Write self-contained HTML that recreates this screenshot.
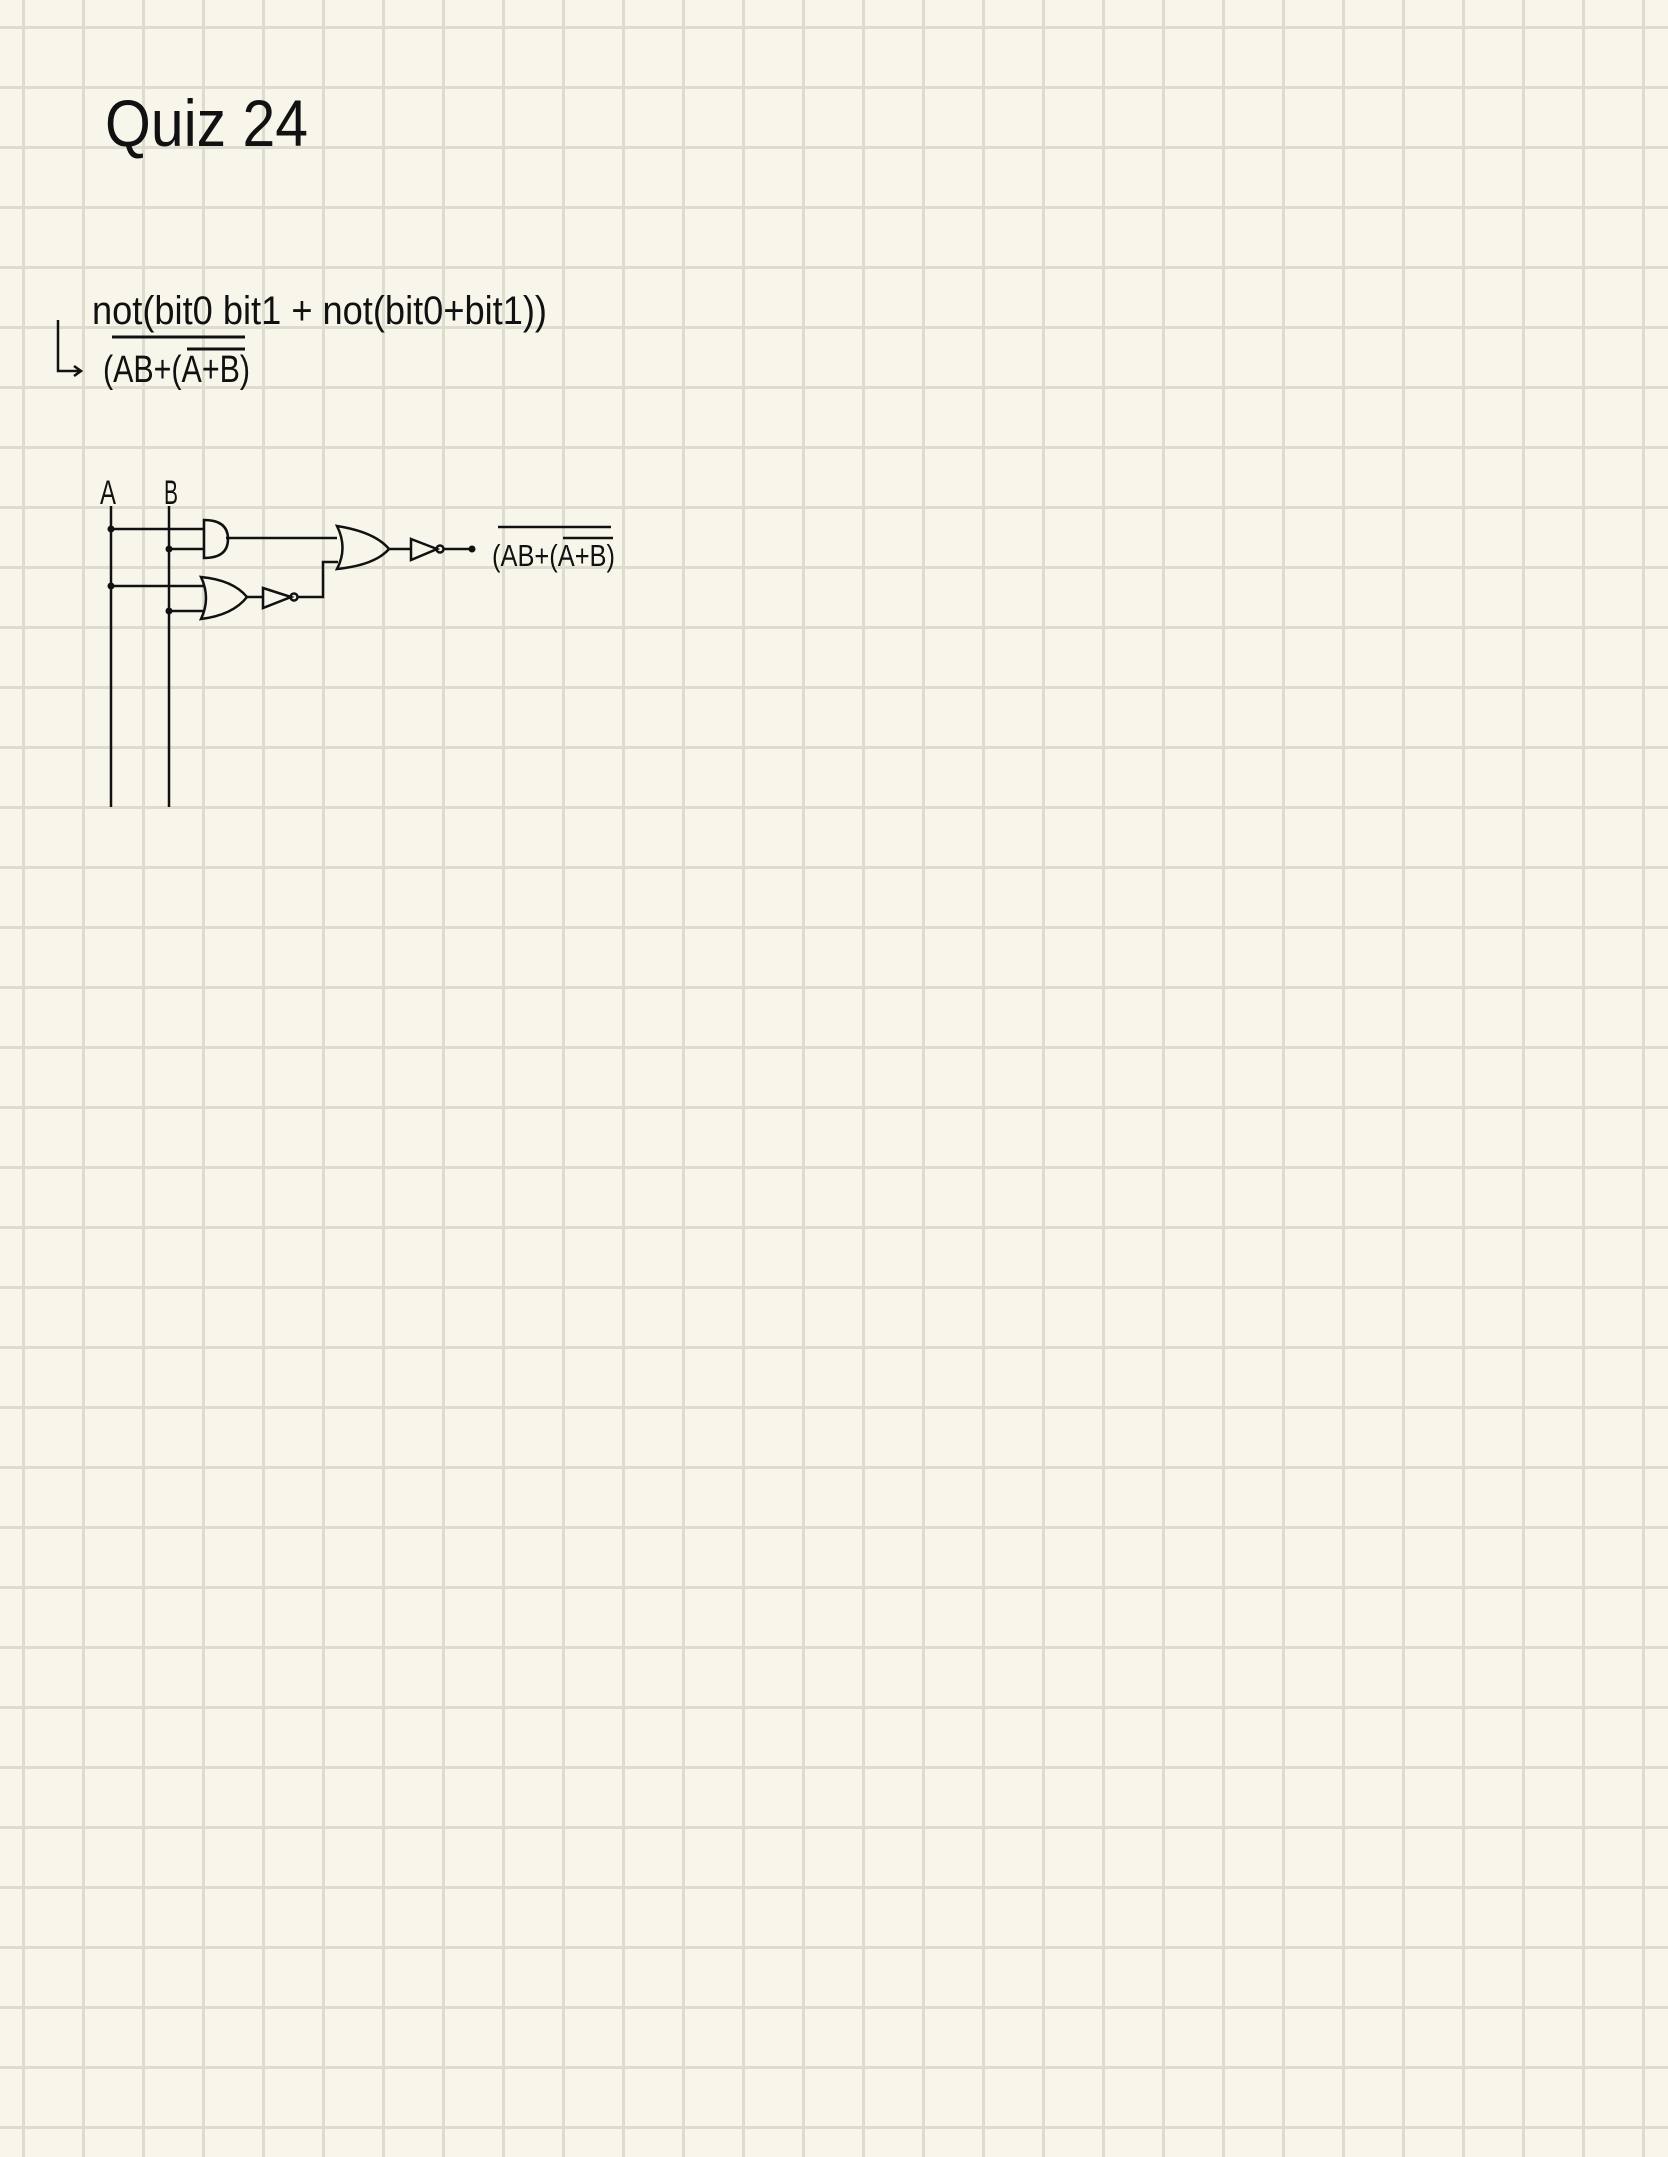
<!DOCTYPE html>
<html><head><meta charset="utf-8"><style>
html,body{margin:0;padding:0}
body{width:1668px;height:2157px;overflow:hidden;background-color:#f8f5ea;
background-image:linear-gradient(to right,#dedbcf 0,#dedbcf 3px,transparent 3px),linear-gradient(to bottom,#dedbcf 0,#dedbcf 3px,transparent 3px);
background-size:60px 60px;background-position:22px 0,0 26px;}
svg{position:absolute;left:0;top:0}
text{font-family:"Liberation Sans",sans-serif;fill:#111}
</style></head><body>
<svg width="1668" height="2157" viewBox="0 0 1668 2157">
<text x="105" y="146" font-size="66" textLength="203" lengthAdjust="spacingAndGlyphs" style="font-weight:300">Quiz 24</text>
<text x="92" y="324" font-size="40" textLength="455" lengthAdjust="spacingAndGlyphs">not(bit0 bit1 + not(bit0+bit1))</text>
<path d="M58 320 L58 371 L80 371 M74 366 L81 371 L74 376" stroke="#111" stroke-width="2.5" fill="none"/>
<line x1="112" y1="337" x2="245" y2="337" stroke="#111" stroke-width="3"/>
<line x1="187" y1="349" x2="245" y2="349" stroke="#111" stroke-width="3"/>
<text x="103" y="382" font-size="38" textLength="147" lengthAdjust="spacingAndGlyphs">(AB+(A+B)</text>
<g stroke="#111" stroke-width="2.5" fill="none">
<text x="100" y="504" font-size="34" textLength="16" lengthAdjust="spacingAndGlyphs" stroke="none">A</text>
<text x="164" y="504" font-size="34" textLength="14" lengthAdjust="spacingAndGlyphs" stroke="none">B</text>
<line x1="111" y1="506" x2="111" y2="807"/>
<line x1="169" y1="506" x2="169" y2="807"/>
<line x1="111" y1="529" x2="204" y2="529"/>
<line x1="169" y1="549" x2="204" y2="549"/>
<path d="M204 520 L204 558 Q228 558 228 539 Q228 520 204 520 Z"/>
<line x1="226" y1="538" x2="337" y2="538"/>
<line x1="111" y1="586" x2="204" y2="586"/>
<line x1="169" y1="611" x2="204" y2="611"/>
<path d="M201 577 Q211 598 201 619 Q233 615 247 597 Q233 580 201 577 Z"/>
<line x1="247" y1="597" x2="263" y2="597"/>
<path d="M263 588 L291 597 L263 608 Z"/>
<circle cx="294" cy="597" r="3.5"/>
<path d="M297 597 L323 597 L323 562 L338 562"/>
<path d="M337 526 Q348 548 337 569 Q375 565 389 549 Q375 532 337 526 Z"/>
<line x1="389" y1="549" x2="411" y2="549"/>
<path d="M411 539 L437 549 L411 560 Z"/>
<circle cx="440" cy="549" r="3.5"/>
<line x1="443" y1="549" x2="472" y2="549"/>
<line x1="498" y1="527" x2="611" y2="527"/>
<line x1="563" y1="538" x2="613" y2="538"/>
</g>
<g fill="#111">
<circle cx="111" cy="529" r="3.5"/><circle cx="111" cy="586" r="3.5"/>
<circle cx="169" cy="549" r="3.5"/><circle cx="169" cy="611" r="3.5"/>
<circle cx="472" cy="549" r="3.5"/>
</g>
<text x="492" y="566" font-size="31" textLength="123" lengthAdjust="spacingAndGlyphs">(AB+(A+B)</text>
</svg>
</body></html>
